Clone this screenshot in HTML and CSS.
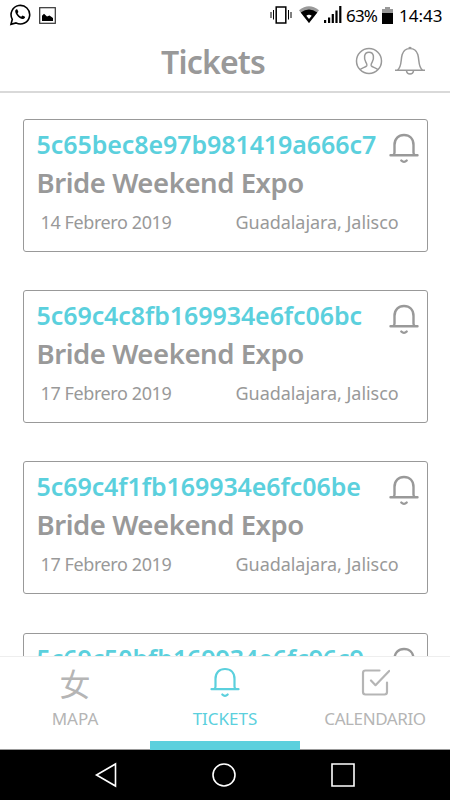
FILE: index.html
```
<!DOCTYPE html>
<html lang="es">
<head>
  <meta charset="UTF-8" />
  <meta name="viewport" content="width=device-width, initial-scale=1" />
  <title>Tickets</title>
  <link rel="stylesheet" href="styles.css">
</head>
<body>
  <svg class="defs" width="0" height="0">
    <symbol id="bell" viewBox="0 0 30 32">
      <path d="M1.500 22.200h27M4.200 22q1.300-.6 1.300-2.600V12C5.500 5.500 9.500 2 15 2S24.500 5.500 24.500 12v7.400q0 2 1.300 2.600M12.300 27.500q2.700 2.800 5.400 0" />
    </symbol>
  </svg>

  <div class="statusbar">
    <svg class="whatsapp" width="22" height="22" viewBox="0 0 22 22">
      <path d="M2 20.300l1.300-5A9.300 9.300 0 1 1 7 18.900z" fill="none" stroke="#000" stroke-width="1.600" />
      <path d="M7.200 5.200c-1.600 1-1.200 3.400.5 5.700 2.100 2.900 5.200 4.700 7 3.900 1.300-.6 1.500-1.500 1.300-2.100l-2.400-1.300-1.500 1.300c-1.900-.8-2.800-1.800-3.600-3.400l.9-1.300-1-2.500z" />
    </svg>
    <svg class="picture" width="17" height="17" viewBox="0 0 17 17">
      <rect x=".7" y=".7" width="15.600" height="15.600" fill="none" stroke="#333" stroke-width="1.200" />
      <path d="M3 14V8.800l2-2 3 2.700 2.500-1 3.500 2.500v3z" />
    </svg>
    <div class="status-right">
      <svg class="vibrate" width="22" height="18" viewBox="0 0 22 18" fill="none" stroke="#000">
        <rect x="6.200" y="1" width="9.600" height="16" stroke-width="1.500" />
        <path d="M1 6v6M3.500 4v9.500M18.500 4v9.500M21 6v6" />
      </svg>
      <svg class="wifi" width="20" height="18" viewBox="0 0 20 18">
        <path d="M0 4.200Q10-3.500 20 4.200L10 17z" fill="#999" />
        <path d="M1.700 6.500Q10 .5 18.300 6.500L10 17z" />
        <path d="M7.300 9.700Q10 7.700 12.700 9.700L10 13z" fill="#fff" />
      </svg>
      <svg class="signal" width="18" height="18" viewBox="0 0 18 18">
        <path d="M0 14h2.200v3H0zM4 11.500h2.200V17H4zM7.700 8h2.200v9H7.700zM11.400 4.500h2.200V17h-2.200zM15.200 0h2.200v17h-2.200z" />
      </svg>
      <span class="percent">63%</span>
      <svg class="battery" width="11" height="17" viewBox="0 0 11 17">
        <path d="M3 0h5v2h3v4H0V2h3z" fill="#999" />
        <path d="M0 6h11v11H0z" />
      </svg>
      <span class="time">14:43</span>
    </div>
  </div>

  <header>
    <h1>Tickets</h1>
    <svg class="profile" width="28" height="28" viewBox="0 0 28 28">
      <circle cx="14" cy="14" r="12.500" />
      <path d="M5.200 22.700c1-2 5.700-2.200 6.600-4.100.5-1.200-.3-2.200-1-3.400-1.900-3.400-2.300-10 3.200-10s5.100 6.600 3.200 10c-.7 1.200-1.500 2.200-1 3.400.9 1.900 5.600 2.100 6.600 4.100" />
    </svg>
    <svg class="alerts" width="32" height="30" viewBox="0 0 32 30">
      <path d="M1 24.200h30M3.500 24C8 21 6.500 14 8.200 8.500 9.500 4.500 12.500 2.500 16 2.500s6.500 2 7.800 6C25.500 14 24 21 28.500 24M12.500 25c.5 4 6.500 4 7 0M14.800 2.200q1.200-1.500 2.400 0" />
    </svg>
  </header>

  <main>
    <div class="ticket">
      <div class="code">5c65bec8e97b981419a666c7</div>
      <svg class="bell"><use href="#bell" /></svg>
      <h2>Bride Weekend Expo</h2>
      <div class="info"><span class="date">14 Febrero 2019</span><span class="place">Guadalajara, Jalisco</span></div>
    </div>
    <div class="ticket">
      <div class="code">5c69c4c8fb169934e6fc06bc</div>
      <svg class="bell"><use href="#bell" /></svg>
      <h2>Bride Weekend Expo</h2>
      <div class="info"><span class="date">17 Febrero 2019</span><span class="place">Guadalajara, Jalisco</span></div>
    </div>
    <div class="ticket">
      <div class="code">5c69c4f1fb169934e6fc06be</div>
      <svg class="bell"><use href="#bell" /></svg>
      <h2>Bride Weekend Expo</h2>
      <div class="info"><span class="date">17 Febrero 2019</span><span class="place">Guadalajara, Jalisco</span></div>
    </div>
    <div class="ticket">
      <div class="code">5c69c50bfb169934e6fc96c9</div>
      <svg class="bell"><use href="#bell" /></svg>
    </div>
  </main>

  <nav class="tabs">
    <div class="tab">
      <span class="glyph">女</span>
      <span class="label">MAPA</span>
    </div>
    <div class="tab active">
      <svg class="tab-icon"><use href="#bell" /></svg>
      <span class="label">TICKETS</span>
    </div>
    <div class="tab">
      <svg class="tab-icon" viewBox="0 0 30 32">
        <path d="M19.500 3.500H5.500Q3 3.500 3 6v19q0 2.500 2.500 2.500h19Q27 27.500 27 25V15.500M11 13.500l4.500 4.700L29.200 4" />
      </svg>
      <span class="label calendario">CALENDARIO</span>
    </div>
  </nav>

  <div class="navbar">
    <svg width="24" height="26" viewBox="0 0 24 26"><path d="M21.500 2v22L2.500 13z" /></svg>
    <svg width="26" height="26" viewBox="0 0 26 26"><circle cx="13" cy="13" r="11" /></svg>
    <svg width="26" height="26" viewBox="0 0 26 26"><path d="M2 2h22v22H2z" /></svg>
  </div>
</body>
</html>
```
FILE: styles.css
```
* {
  box-sizing: border-box;
}
body {
  font-family: "Noto Sans", "Noto Sans CJK SC", sans-serif;
  background: #fff;
  color: #999;
  margin: 0;
  height: 800px;
  display: flex;
  flex-direction: column;
  overflow: hidden;
}
svg {
  display: block;
  flex: none;
}
.defs {
  position: absolute;
}
.statusbar {
  height: 32px;
  flex: none;
  display: flex;
  padding: 4px 8px 0 9px;
  color: #000;
}
.picture {
  margin: 3px 0 0 8px;
}
.status-right {
  display: flex;
  margin-left: auto;
  font-size: 17px;
  line-height: 24px;
}
.vibrate, .wifi, .signal {
  margin-top: 2px;
}
.wifi {
  margin-left: 7px;
}
.signal {
  margin-left: 5px;
}
.percent {
  width: 31px;
  margin-left: 4px;
  letter-spacing: -0.8px;
}
.battery {
  margin: 3px 0 0 5px;
}
.time {
  width: 43px;
  margin-left: 6px;
}
header {
  height: 61px;
  flex: none;
  display: flex;
  padding-left: 161px;
  border-bottom: 2px solid #d9d9d9;
}
h1 {
  width: 194px;
  margin: 8px 0 0;
  font-size: 32px;
  line-height: 44px;
  font-weight: 600;
  letter-spacing: -0.8px;
}
.profile, .alerts {
  fill: none;
  stroke: #999;
  stroke-width: 1.5;
}
.profile {
  margin-top: 15px;
}
.alerts {
  margin: 14px 0 0 11px;
}
main {
  height: 563px;
  flex: none;
  display: flex;
  flex-direction: column;
  gap: 38.2px;
  padding: 26px 22.5px 0;
  overflow: hidden;
}
.ticket {
  position: relative;
  height: 133px;
  flex: none;
  padding: 6px 0 0 13px;
  border: 1px solid #999;
  border-radius: 3px;
  white-space: nowrap;
}
.code {
  font-size: 25px;
  line-height: 36px;
  font-weight: 600;
  letter-spacing: -0.08px;
  color: #5bd0dd;
}
.bell {
  position: absolute;
  top: 13px;
  right: 8px;
  width: 30px;
  height: 32px;
  fill: none;
  stroke: #999;
  stroke-width: 2.4;
  stroke-linecap: round;
}
h2 {
  margin: 0;
  font-size: 27.5px;
  line-height: 42px;
  font-weight: 600;
  letter-spacing: -0.44px;
}
.info {
  display: flex;
  padding-left: 4px;
  font-size: 18px;
  line-height: 36px;
}
.date {
  width: 195px;
  letter-spacing: -0.4px;
}
.place {
  letter-spacing: -0.05px;
}
.tabs {
  height: 94px;
  flex: none;
  display: flex;
  border-top: 1px solid #eee;
  border-bottom: 1px solid #999;
}
.tab {
  flex: 1;
  display: flex;
  flex-direction: column;
  align-items: center;
  padding-top: 10px;
  color: #b5b5b5;
}
.tab.active {
  color: #5bd0dd;
  margin-bottom: -1px;
  border-bottom: 9px solid #5bd0dd;
}
.glyph {
  height: 32px;
  font-family: "Noto Sans CJK SC", sans-serif;
  font-size: 31px;
  line-height: 31px;
}
.tab-icon {
  width: 30px;
  height: 32px;
  fill: none;
  stroke: currentColor;
  stroke-width: 2.2;
  stroke-linecap: round;
  stroke-linejoin: round;
}
.label {
  margin-top: 7px;
  font-size: 17px;
  line-height: 25px;
}
.calendario {
  letter-spacing: -0.4px;
}
.navbar {
  flex: 1;
  display: flex;
  justify-content: space-between;
  align-items: center;
  padding: 0 94px;
  background: #000;
}
.navbar svg {
  fill: none;
  stroke: #fff;
  stroke-width: 1.6;
}
```
